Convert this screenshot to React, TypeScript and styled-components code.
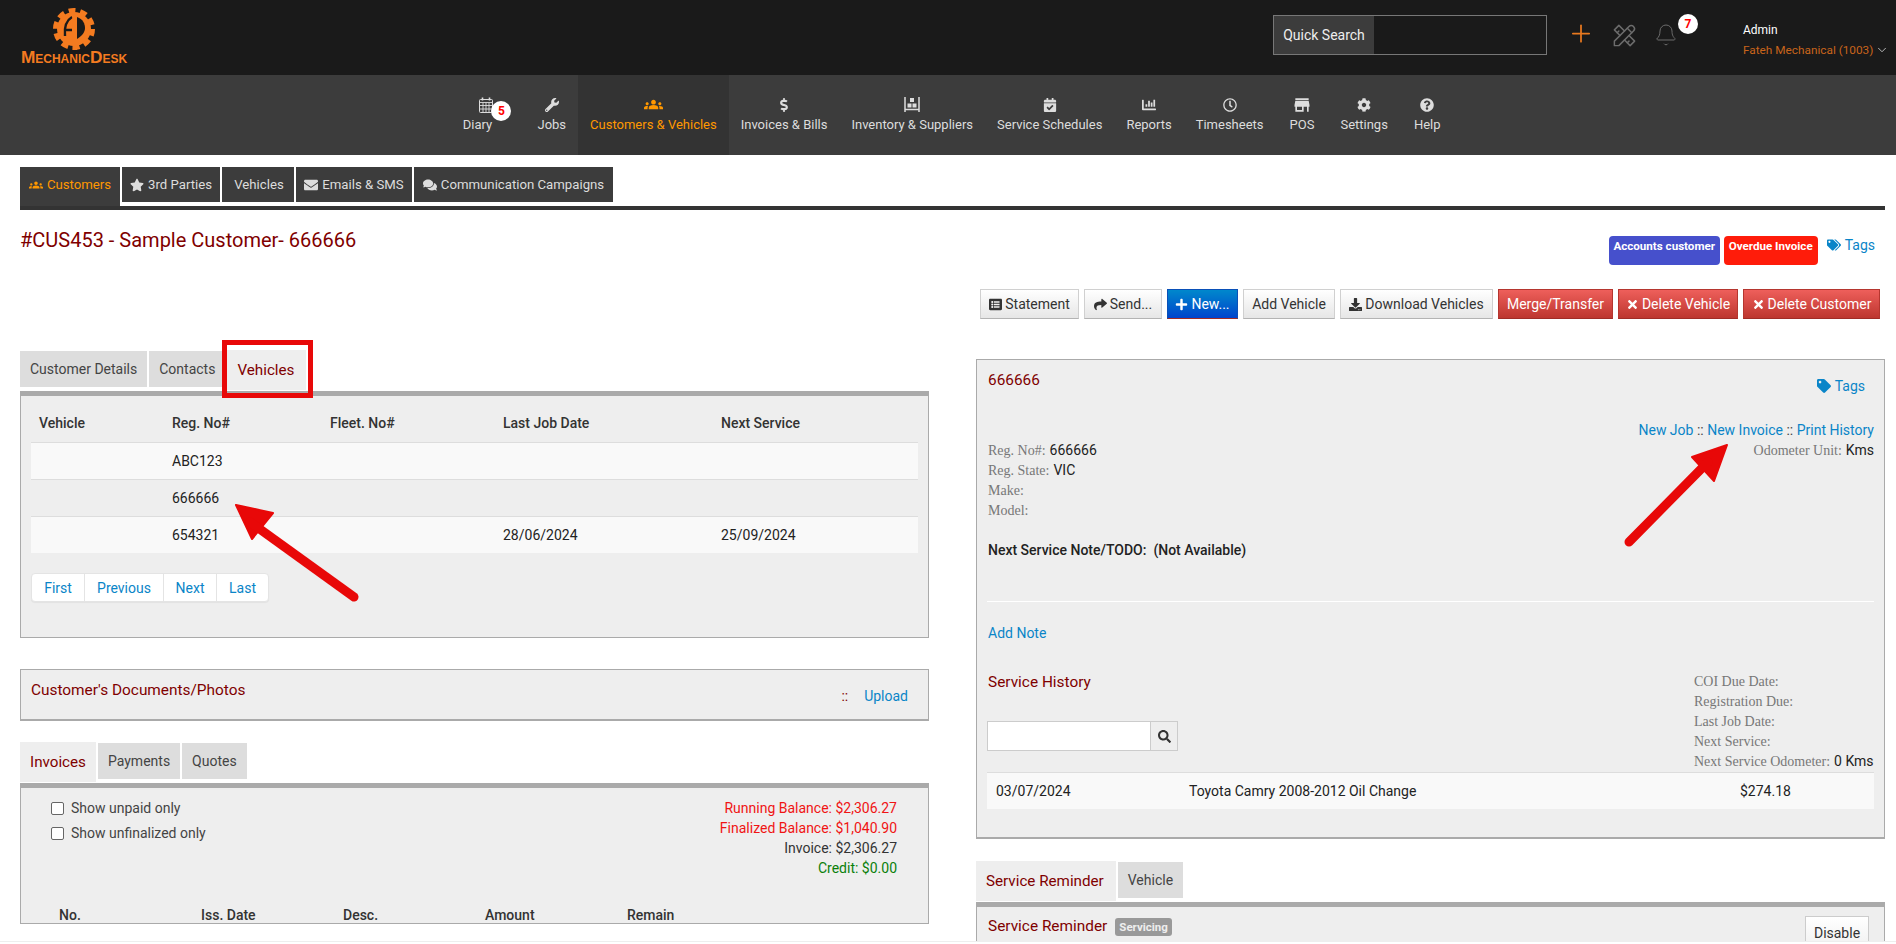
import React from "react";
import styled, { createGlobalStyle } from "styled-components";
import {
  FaWrench, FaDollarSign, FaCalendarCheck, FaChartBar, FaRegClock, FaCog,
  FaQuestionCircle, FaStar, FaEnvelope, FaComments, FaTags, FaTag, FaListAlt, FaShare, FaPlus, FaDownload, FaTimes, FaSearch,
} from "react-icons/fa";
import { MdGroups, MdStore } from "react-icons/md";
import { TbTools } from "react-icons/tb";
import { Bell, ChevronDown, Plus } from "lucide-react";

const Global = createGlobalStyle`
  html, body { margin: 0; padding: 0; background: #fff; }
  * { box-sizing: border-box; }
  body { font-family: Roboto, "Liberation Sans", sans-serif; font-size: 14px; color: #333; }
`;

const maroon = "#7f0000";
const link = "#0a85c8";

const Page = styled.div`
  position: relative;
  width: 1896px;
  height: 942px;
  overflow: hidden;
  border-bottom: 1px solid #eee;
`;
const Header = styled.header`
  height: 75px;
  background: #1a1a1a;
  display: flex;
  align-items: center;
  padding: 0 0 5px 20px;
`;
const Logo = styled.div`
  width: 108px;
  height: 66px;
  display: flex;
  flex-direction: column;
  align-items: center;
  color: #f47b20;
  margin-top: 6px;
`;
const LogoText = styled.span`
  font-family: "Liberation Sans", sans-serif;
  font-variant: small-caps;
  font-weight: 700;
  font-size: 17.3px;
  line-height: 14px;
  margin-top: -3px;
  white-space: nowrap;
`;
const Spacer = styled.div`flex: 1;`;
const QuickSearch = styled.div`
  width: 274px;
  height: 40px;
  border: 1px solid #777;
  display: flex;
  margin-right: 20px;
`;
const QuickLabel = styled.div`
  width: 100px;
  background: #3c3c3c;
  color: #eee;
  display: flex;
  align-items: center;
  justify-content: center;
  font-size: 14px;
`;
const HeadIcon = styled.div<{ $w: number; $c?: string; $up?: number }>`
  position: relative;
  width: ${(p) => p.$w}px;
  display: flex;
  justify-content: center;
  color: ${(p) => p.$c ?? "#6c6c6c"};
  margin-bottom: ${(p) => p.$up ?? 0}px;
`;
const WhiteBadge = styled.span`
  position: absolute;
  width: 20px;
  height: 20px;
  border-radius: 50%;
  background: #fff;
  color: #f00;
  font-size: 12px;
  font-weight: 700;
  display: flex;
  align-items: center;
  justify-content: center;
`;
const BellBadge = styled(WhiteBadge)`
  left: 25px;
  top: -9px;
`;
const User = styled.div`
  margin-left: 64px;
  width: 153px;
  font-size: 12px;
  line-height: 20px;
  color: #fff;
  padding-top: 10px;
`;
const Company = styled.div`
  color: #c8641a;
  display: flex;
  align-items: center;
  white-space: nowrap;
  gap: 2px;
  font-size: 11.8px;
`;

const Nav = styled.nav`
  height: 80px;
  background: #3c3c3c;
  display: flex;
  justify-content: center;
  padding-left: 6px;
`;
const NavItem = styled.div<{ $active?: boolean; $pl?: number; $pr?: number }>`
  position: relative;
  padding: 22px ${(p) => p.$pr ?? 12}px 0 ${(p) => p.$pl ?? 12}px;
  background: ${(p) => (p.$active ? "#333" : "transparent")};
  color: ${(p) => (p.$active ? "#ff9800" : "#ddd")};
  display: flex;
  flex-direction: column;
  align-items: center;
  font-size: 13px;
  white-space: nowrap;
`;
const NavIcon = styled.div<{ $shift?: number; $size?: number }>`
  height: 15px;
  display: flex;
  align-items: center;
  justify-content: center;
  font-size: ${(p) => p.$size ?? 14}px;
  margin-left: ${(p) => p.$shift ?? 0}px;
`;
const NavLabel = styled.div`
  margin-top: 4px;
  line-height: 17px;
`;
const DiaryBadge = styled(WhiteBadge)`
  left: 42px;
  top: 26px;
`;

const SubNav = styled.div`
  margin: 12px 11px 0 20px;
  height: 43px;
  border-bottom: 4px solid #333;
  display: flex;
  gap: 2px;
`;
const SubTab = styled.div<{ $active?: boolean; $w: number; $nudge?: number }>`
  width: ${(p) => p.$w}px;
  height: ${(p) => (p.$active ? 39 : 35)}px;
  background: #3c3c3c;
  color: ${(p) => (p.$active ? "#ff9800" : "#ddd")};
  font-size: 13.2px;
  padding: 10px 0 0 ${(p) => p.$nudge ?? 0}px;
  display: flex;
  justify-content: center;
  align-items: flex-start;
  gap: 4px;
  line-height: 16px;
  white-space: nowrap;
  svg { margin-top: 1px; font-size: 14px; }
`;
const HeadingRow = styled.div`
  margin: 26px 20px 0 20px;
  height: 29px;
  display: flex;
  align-items: flex-start;
  justify-content: space-between;
`;
const Title = styled.h1`
  margin: -8px 0 0;
  font-size: 20px;
  font-weight: 400;
  color: ${maroon};
  line-height: 24px;
`;
const Badges = styled.div`
  display: flex;
  gap: 4px;
`;
const Flag = styled.span<{ $bg: string; $w: number }>`
  width: ${(p) => p.$w}px;
  height: 29px;
  background: ${(p) => p.$bg};
  border-radius: 4px;
  color: #fff;
  font-size: 11.6px;
  font-weight: 700;
  text-align: center;
  padding-top: 3px;
  line-height: 14px;
  white-space: nowrap;
`;
const TagsLink = styled.a`
  color: ${link};
  font-size: 14px;
  display: inline-flex;
  align-items: center;
  gap: 4px;
  line-height: 18px;
`;
const FlagTags = styled(TagsLink)`
  margin-left: 5px;
  margin-right: 1px;
  align-self: flex-start;
`;
const Actions = styled.div`
  margin: 24px 16px 0 0;
  display: flex;
  justify-content: flex-end;
  gap: 5px;
`;
const Btn = styled.button<{ $kind?: "blue" | "red"; $w: number }>`
  width: ${(p) => p.$w}px;
  height: 30px;
  padding: 0;
  font: 14px Roboto, sans-serif;
  display: flex;
  align-items: center;
  justify-content: center;
  gap: 3px;
  white-space: nowrap;
  border: 1px solid ${(p) => (p.$kind === "blue" ? "#0a50b8" : p.$kind === "red" ? "#b5362f" : "#d0d0d0")};
  border-bottom-color: ${(p) => (p.$kind ? "#a02c26" : "#b3b3b3")};
  color: ${(p) => (p.$kind ? "#fff" : "#333")};
  background: ${(p) =>
    p.$kind === "blue"
      ? "linear-gradient(#0088cc, #0044cc)"
      : p.$kind === "red"
      ? "linear-gradient(#ee5f5b, #bd362f)"
      : "linear-gradient(#fff, #e6e6e6)"};
  svg { font-size: 13px; }
`;

const Columns = styled.div`
  margin: 31px 0 0 20px;
  display: grid;
  grid-template-columns: 909px 909px;
  column-gap: 47px;
  align-items: start;
`;
const Col = styled.div<{ $top?: number }>`
  padding-top: ${(p) => p.$top ?? 0}px;
`;
const TabStrip = styled.div`
  height: 41px;
  display: flex;
  align-items: flex-start;
  gap: 2px;
`;
const Tab = styled.div<{ $active?: boolean; $tight?: boolean }>`
  position: relative;
  height: ${(p) => (p.$active ? 40 : 36)}px;
  margin-top: ${(p) => (p.$active ? 0 : 1)}px;
  padding: 0 ${(p) => (p.$active && !p.$tight ? 12 : 10)}px 0 10px;
  background: ${(p) => (p.$active ? "#eee" : "#ddd")};
  color: ${(p) => (p.$active ? maroon : "#444")};
  font-size: ${(p) => (p.$active ? 15.2 : 14)}px;
  display: flex;
  align-items: center;
  white-space: nowrap;
`;
const Highlight = styled.span`
  position: absolute;
  left: -5px;
  right: -7px;
  top: -10px;
  bottom: -8px;
  border: 5px solid #e80808;
`;
const Panel = styled.section<{ $bottom?: number }>`
  background: #eee;
  border: 1px solid #aaa;
  border-top: 5px solid #aaa;
  padding: 9px 10px ${(p) => p.$bottom ?? 0}px;
`;
const Table = styled.table`
  width: 887px;
  table-layout: fixed;
  border-collapse: collapse;
`;
const Th = styled.th<{ $w: number }>`
  width: ${(p) => p.$w}px;
  height: 37px;
  padding: 0 8px;
  text-align: left;
  font-weight: 500;
  font-size: 14px;
  color: #333;
`;
const Tr = styled.tr<{ $odd?: boolean }>`
  background: ${(p) => (p.$odd ? "#f9f9f9" : "#eee")};
  border-top: 1px solid #ddd;
`;
const Td = styled.td`
  height: 37px;
  padding: 0 8px;
  color: #222;
  font-size: 14px;
`;
const Pager = styled.div`
  margin-top: 20px;
  display: inline-flex;
  height: 29px;
  border-radius: 4px;
  background: #fff;
  border: 1px solid #e4e4e4;
  box-shadow: 0 1px 1px rgba(0, 0, 0, .05);
`;
const PageLink = styled.a<{ $w: number }>`
  width: ${(p) => p.$w}px;
  display: flex;
  align-items: center;
  justify-content: center;
  color: ${link};
  font-size: 14px;
  & + & { border-left: 1px solid #e4e4e4; }
`;
const Docs = styled.section`
  margin-top: 31px;
  height: 52px;
  background: #eee;
  border: 2px solid #aaa;
  border-width: 1px 1px 2px;
  display: flex;
  justify-content: space-between;
  padding: 11px 20px 0 10px;
`;
const Maroon = styled.div`
  color: ${maroon};
  font-size: 15.4px;
  line-height: 18px;
`;
const DocActions = styled.div`
  display: flex;
  gap: 16px;
  color: ${maroon};
  padding-top: 6px;
  line-height: 18px;
  a { color: ${link}; font-size: 14px; }
`;
const InvoiceStrip = styled(TabStrip)`
  margin-top: 21px;
`;
const FilterRow = styled.div`
  display: flex;
  justify-content: space-between;
  padding: 1px 21px 0 20px;
`;
const CheckList = styled.div`
  display: flex;
  flex-direction: column;
  gap: 5px;
`;
const CheckLabel = styled.label`
  display: flex;
  align-items: center;
  height: 20px;
  gap: 7px;
  color: #444;
  font-size: 14px;
  span { width: 13px; height: 13px; border: 1px solid #666; border-radius: 2px; background: #fff; }
`;
const Amounts = styled.div`
  text-align: right;
  line-height: 20px;
  font-size: 14px;
`;
const Amount = styled.div<{ $c: string }>`
  color: ${(p) => p.$c};
`;
const InvoiceHead = styled.div`
  margin-top: 29px;
  padding-left: 28px;
  display: grid;
  grid-template-columns: repeat(5, 142px);
  font-weight: 500;
  font-size: 14px;
  color: #333;
`;

const VehiclePanel = styled.section`
  height: 480px;
  background: #eee;
  border: 1px solid #aaa;
  border-bottom-width: 2px;
  padding: 11px 10px 0 11px;
`;
const CardTop = styled.div`
  display: flex;
  justify-content: space-between;
  height: 49px;
  padding-right: 9px;
`;
const CardTags = styled(TagsLink)`
  align-self: flex-start;
  margin-top: 6px;
`;
const LinksRow = styled.div`
  text-align: right;
  height: 20px;
  line-height: 20px;
  color: #444;
  font-size: 14px;
  a { color: ${link}; }
`;
const InfoRow = styled.div`
  display: flex;
  justify-content: space-between;
  align-items: flex-start;
`;
const Info = styled.div<{ $w?: number }>`
  width: ${(p) => (p.$w ? `${p.$w}px` : "auto")};
`;
const Line = styled.div`
  height: 20px;
  line-height: 20px;
  white-space: nowrap;
  font-size: 14px;
  color: #222;
`;
const Lbl = styled.span`
  font-family: "Liberation Serif", serif;
  color: #777;
  margin-right: 4px;
`;
const Note = styled.div`
  margin-top: 20px;
  font-weight: 500;
  line-height: 20px;
  font-size: 14px;
  color: #222;
`;
const Rule = styled.hr`
  margin: 41px 0 0 -1px;
  border: 0;
  border-top: 1px solid #fff;
`;
const AddNote = styled.a`
  display: block;
  margin-top: 21px;
  color: ${link};
  font-size: 14px;
  line-height: 20px;
`;
const History = styled(InfoRow)`
  margin-top: 28px;
  height: 100px;
`;
const HistoryTitle = styled(Maroon)`
  margin-top: 2px;
`;
const SearchBox = styled.div`
  margin: 30px 0 0 -1px;
  display: flex;
  width: 191px;
  height: 30px;
  border: 1px solid #ccc;
  background: #fff;
`;
const SearchBtn = styled.div`
  margin-left: auto;
  width: 27px;
  background: #eee;
  border-left: 1px solid #ccc;
  display: flex;
  align-items: center;
  justify-content: center;
  color: #333;
  font-size: 13px;
`;
const HistoryRow = styled.div`
  margin: 1px 0 0 -1px;
  height: 37px;
  background: #f9f9f9;
  border-top: 1px solid #ddd;
  display: grid;
  grid-template-columns: 193px 551px 1fr;
  align-items: center;
  padding-left: 9px;
  color: #222;
  font-size: 14px;
`;
const ReminderStrip = styled(TabStrip)`
  margin-top: 22px;
`;
const ReminderHead = styled.div`
  display: flex;
  align-items: flex-start;
  gap: 8px;
  padding: 1px 0 0 1px;
`;
const GreyLabel = styled.span`
  background: #999;
  color: #eee;
  border-radius: 3px;
  font-size: 11.5px;
  font-weight: 700;
  padding: 2px 4px;
  height: 18px;
  line-height: 14px;
  margin-top: 1px;
`;
const Disable = styled.button`
  margin: -1px 5px 0 auto;
  width: 64px;
  height: 34px;
  font: 14px Roboto, sans-serif;
  color: #333;
  background: linear-gradient(#fff, #f0f0f0);
  border: 1px solid #ccc;
`;
const Overlay = styled.svg`
  position: absolute;
  left: 0;
  top: 0;
  pointer-events: none;
`;

const GearLogo = () => (
  <svg width="48" height="48" viewBox="0 0 48 48">
    <circle cx="24" cy="24" r="18" fill="none" stroke="#f47b20" strokeWidth="6" strokeDasharray="6.6 4.7" />
    <circle cx="24" cy="24" r="17" fill="#f47b20" />
    <path d="M15 31 C14 21 17 15 22 12 M16 25 H22" fill="none" stroke="#1a1a1a" strokeWidth="2.4" />
    <path d="M27 12 C33 14 35 19 35 23 C35 27 32 31 27 34 Z" fill="#1a1a1a" />
    <rect x="22.5" y="9" width="4.5" height="36" fill="#f47b20" />
  </svg>
);
const ShelfIcon = () => (
  <svg width="16" height="15" viewBox="0 0 16 15" fill="none" stroke="currentColor">
    <path d="M1 0v15M15 0v15M1 12.5h14" strokeWidth="1.5" />
    <rect x="3.5" y="6.5" width="4" height="4" fill="currentColor" stroke="none" />
    <rect x="8.5" y="6.5" width="4" height="4" fill="currentColor" stroke="none" />
    <rect x="6" y="1" width="4" height="4" fill="currentColor" stroke="none" />
  </svg>
);
const DiaryIcon = () => (
  <svg width="14" height="16" viewBox="0 0 14 16" fill="none" stroke="currentColor">
    <rect x="0.5" y="2.5" width="13" height="13" rx="1" />
    <path d="M0.5 5.5h13M0.5 8.5h13M0.5 12h13M4 5.5v10M7 5.5v10M10 5.5v10" strokeWidth="0.9" />
    <path d="M3.5 0.5v3M10.5 0.5v3" strokeWidth="1.6" />
  </svg>
);

const navItems: { label: string; icon: React.ReactNode; size?: number; active?: boolean; pl?: number; pr?: number }[] = [
  { label: "Jobs", icon: <FaWrench /> },
  { label: "Customers & Vehicles", icon: <MdGroups />, size: 19, active: true },
  { label: "Invoices & Bills", icon: <FaDollarSign /> },
  { label: "Inventory & Suppliers", icon: <ShelfIcon /> },
  { label: "Service Schedules", icon: <FaCalendarCheck /> },
  { label: "Reports", icon: <FaChartBar /> },
  { label: "Timesheets", icon: <FaRegClock /> },
  { label: "POS", icon: <MdStore />, size: 20, pl: 14, pr: 14 },
  { label: "Settings", icon: <FaCog />, pr: 14 },
  { label: "Help", icon: <FaQuestionCircle /> },
];

export default function App() {
  return (
    <Page>
      <Global />
      <Header>
        <Logo>
          <GearLogo />
          <LogoText>MechanicDesk</LogoText>
        </Logo>
        <Spacer />
        <QuickSearch>
          <QuickLabel>Quick Search</QuickLabel>
        </QuickSearch>
        <HeadIcon $w={28} $c="#e8791f" $up={4}>
          <Plus size={31} strokeWidth={1.5} />
        </HeadIcon>
        <HeadIcon $w={58}>
          <TbTools size={27} strokeWidth={1.3} />
        </HeadIcon>
        <HeadIcon $w={26}>
          <Bell size={24} strokeWidth={1} />
          <BellBadge>7</BellBadge>
        </HeadIcon>
        <User>
          Admin
          <Company>
            Fateh Mechanical (1003) <ChevronDown size={14} color="#ccc" strokeWidth={1.5} />
          </Company>
        </User>
      </Header>
      <Nav>
        <NavItem $pr={32}>
          <NavIcon $shift={18}><DiaryIcon /></NavIcon>
          <NavLabel>Diary</NavLabel>
          <DiaryBadge>5</DiaryBadge>
        </NavItem>
        {navItems.map((n) => (
          <NavItem key={n.label} $active={n.active} $pl={n.pl} $pr={n.pr}>
            <NavIcon $size={n.size}>{n.icon}</NavIcon>
            <NavLabel>{n.label}</NavLabel>
          </NavItem>
        ))}
      </Nav>
      <SubNav>
        <SubTab $active $w={100}><MdGroups /> Customers</SubTab>
        <SubTab $w={98}><FaStar /> 3rd Parties</SubTab>
        <SubTab $w={72} $nudge={2}>Vehicles</SubTab>
        <SubTab $w={116}><FaEnvelope /> Emails &amp; SMS</SubTab>
        <SubTab $w={199}><FaComments /> Communication Campaigns</SubTab>
      </SubNav>
      <HeadingRow>
        <Title>#CUS453 - Sample Customer- 666666</Title>
        <Badges>
          <Flag $bg="#4650cc" $w={111}>Accounts customer</Flag>
          <Flag $bg="#ff1c0a" $w={94}>Overdue Invoice</Flag>
          <FlagTags><FaTags /> Tags</FlagTags>
        </Badges>
      </HeadingRow>
      <Actions>
        <Btn $w={99}><FaListAlt /> Statement</Btn>
        <Btn $w={78}><FaShare /> Send...</Btn>
        <Btn $w={71} $kind="blue"><FaPlus /> New...</Btn>
        <Btn $w={92}>Add Vehicle</Btn>
        <Btn $w={153}><FaDownload /> Download Vehicles</Btn>
        <Btn $w={115} $kind="red">Merge/Transfer</Btn>
        <Btn $w={120} $kind="red"><FaTimes /> Delete Vehicle</Btn>
        <Btn $w={137} $kind="red"><FaTimes /> Delete Customer</Btn>
      </Actions>
      <Columns>
        <Col>
          <TabStrip>
            <Tab>Customer Details</Tab>
            <Tab>Contacts</Tab>
            <Tab $active>Vehicles<Highlight /></Tab>
          </TabStrip>
          <Panel $bottom={35}>
            <Table>
              <thead>
                <tr>
                  <Th $w={133}>Vehicle</Th>
                  <Th $w={158}>Reg. No#</Th>
                  <Th $w={173}>Fleet. No#</Th>
                  <Th $w={218}>Last Job Date</Th>
                  <Th $w={205}>Next Service</Th>
                </tr>
              </thead>
              <tbody>
                <Tr $odd><Td /><Td>ABC123</Td><Td /><Td /><Td /></Tr>
                <Tr><Td /><Td>666666</Td><Td /><Td /><Td /></Tr>
                <Tr $odd><Td /><Td>654321</Td><Td /><Td>28/06/2024</Td><Td>25/09/2024</Td></Tr>
              </tbody>
            </Table>
            <Pager>
              <PageLink $w={52}>First</PageLink>
              <PageLink $w={79}>Previous</PageLink>
              <PageLink $w={53}>Next</PageLink>
              <PageLink $w={52}>Last</PageLink>
            </Pager>
          </Panel>
          <Docs>
            <Maroon>Customer's Documents/Photos</Maroon>
            <DocActions>:: <a>Upload</a></DocActions>
          </Docs>
          <InvoiceStrip>
            <Tab $active $tight>Invoices</Tab>
            <Tab>Payments</Tab>
            <Tab>Quotes</Tab>
          </InvoiceStrip>
          <Panel>
            <FilterRow>
              <CheckList>
                <CheckLabel><span />Show unpaid only</CheckLabel>
                <CheckLabel><span />Show unfinalized only</CheckLabel>
              </CheckList>
              <Amounts>
                <Amount $c="#f01414">Running Balance: $2,306.27</Amount>
                <Amount $c="#f01414">Finalized Balance: $1,040.90</Amount>
                <Amount $c="#333">Invoice: $2,306.27</Amount>
                <Amount $c="#0a800a">Credit: $0.00</Amount>
              </Amounts>
            </FilterRow>
            <InvoiceHead>
              <span>No.</span><span>Iss. Date</span><span>Desc.</span><span>Amount</span><span>Remain</span>
            </InvoiceHead>
          </Panel>
        </Col>
        <Col $top={9}>
          <VehiclePanel>
            <CardTop>
              <Maroon>666666</Maroon>
              <CardTags><FaTag /> Tags</CardTags>
            </CardTop>
            <LinksRow><a>New Job</a> :: <a>New Invoice</a> :: <a>Print History</a></LinksRow>
            <InfoRow>
              <Info>
                <Line><Lbl>Reg. No#:</Lbl>666666</Line>
                <Line><Lbl>Reg. State:</Lbl>VIC</Line>
                <Line><Lbl>Make:</Lbl></Line>
                <Line><Lbl>Model:</Lbl></Line>
              </Info>
              <Info>
                <Line><Lbl>Odometer Unit:</Lbl>Kms</Line>
              </Info>
            </InfoRow>
            <Note>Next Service Note/TODO:&nbsp; (Not Available)</Note>
            <Rule />
            <AddNote>Add Note</AddNote>
            <History>
              <Info>
                <HistoryTitle>Service History</HistoryTitle>
                <SearchBox><SearchBtn><FaSearch /></SearchBtn></SearchBox>
              </Info>
              <Info $w={180}>
                <Line><Lbl>COI Due Date:</Lbl></Line>
                <Line><Lbl>Registration Due:</Lbl></Line>
                <Line><Lbl>Last Job Date:</Lbl></Line>
                <Line><Lbl>Next Service:</Lbl></Line>
                <Line><Lbl>Next Service Odometer:</Lbl>0 Kms</Line>
              </Info>
            </History>
            <HistoryRow>
              <span>03/07/2024</span>
              <span>Toyota Camry 2008-2012 Oil Change</span>
              <span>$274.18</span>
            </HistoryRow>
          </VehiclePanel>
          <ReminderStrip>
            <Tab $active>Service Reminder</Tab>
            <Tab>Vehicle</Tab>
          </ReminderStrip>
          <Panel>
            <ReminderHead>
              <Maroon>Service Reminder</Maroon>
              <GreyLabel>Servicing</GreyLabel>
              <Disable>Disable</Disable>
            </ReminderHead>
          </Panel>
        </Col>
      </Columns>
      <Overlay width="1896" height="941" viewBox="0 0 1896 941">
        <path d="M236 505 L273 513 L252 539 Z" fill="#e80808" stroke="#e80808" strokeWidth="2" strokeLinejoin="round" />
        <line x1="354" y1="597" x2="250" y2="522" stroke="#e80808" strokeWidth="9" strokeLinecap="round" />
        <path d="M1727 445 L1692 457 L1714 481 Z" fill="#e80808" stroke="#e80808" strokeWidth="2" strokeLinejoin="round" />
        <line x1="1629" y1="542" x2="1708" y2="462" stroke="#e80808" strokeWidth="9" strokeLinecap="round" />
      </Overlay>
    </Page>
  );
}
